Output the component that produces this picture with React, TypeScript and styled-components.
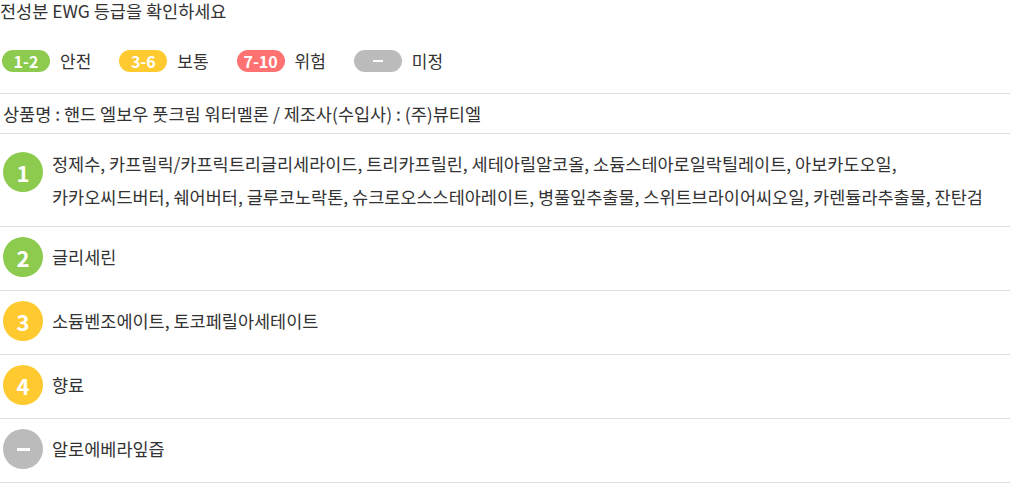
import React from "react";
import styled, { createGlobalStyle } from "styled-components";

const Global = createGlobalStyle`
  html, body { margin: 0; padding: 0; background: #fff; }
  body { font-family: "Noto Sans CJK KR", "Noto Sans", sans-serif; color: #333; }
`;

const Wrap = styled.div`
  width: 1010px;
`;

const Title = styled.h2`
  margin: 0;
  height: 24px;
  font-size: 17.5px;
  line-height: 22px;
  font-weight: 400;
  color: #333;
`;

const Legend = styled.div`
  display: flex;
  align-items: center;
  gap: 28px;
  padding: 26px 0 21px 2px;
  border-bottom: 1px solid #dcdcdc;
`;

const LegendItem = styled.div`
  display: flex;
  align-items: center;
  gap: 10px;
  height: 22px;
`;

const Pill = styled.span<{ $c: string }>`
  display: inline-flex;
  align-items: center;
  justify-content: center;
  width: 48px;
  height: 22px;
  border-radius: 11px;
  background: ${(p) => p.$c};
  color: #fff;
  font-size: 16px;
  font-weight: 700;
  line-height: 1;
`;

const LegendLabel = styled.span`
  font-size: 17px;
  line-height: 22px;
  color: #333;
`;

const PillDash = styled.span`
  display: block;
  width: 10px;
  height: 2px;
  background: #fff;
`;

const Product = styled.div`
  font-size: 17.5px;
  line-height: 39px;
  padding-left: 3px;
  color: #333;
  border-bottom: 1px solid #dcdcdc;
`;

const Row = styled.div`
  display: flex;
  align-items: flex-start;
  gap: 9px;
  padding: 10px 0 13px 3px;
  border-bottom: 1px solid #dcdcdc;
`;

const Circle = styled.span<{ $c: string; $offset?: number }>`
  flex: none;
  width: 40px;
  height: 40px;
  border-radius: 50%;
  background: ${(p) => p.$c};
  margin-top: ${(p) => p.$offset ?? 0}px;
  display: flex;
  align-items: center;
  justify-content: center;
  color: #fff;
  font-size: 22px;
  font-weight: 700;
`;

const Dash = styled.span`
  display: block;
  width: 13px;
  height: 3px;
  background: #fff;
`;

const Text = styled.div`
  font-size: 17.5px;
  line-height: 33px;
  margin-top: 3px;
  color: #333;
  word-break: keep-all;
`;

const GREEN = "#8dcb4e";
const YELLOW = "#ffca30";
const RED = "#ff7272";
const GREY = "#bbbbbb";

const legend = [
  { t: "1-2", c: GREEN, l: "안전" },
  { t: "3-6", c: YELLOW, l: "보통" },
  { t: "7-10", c: RED, l: "위험" },
  { t: "-", c: GREY, l: "미정" },
];

const rows = [
  {
    n: "1",
    c: GREEN,
    off: 8,
    t: "정제수, 카프릴릭/카프릭트리글리세라이드, 트리카프릴린, 세테아릴알코올, 소듐스테아로일락틸레이트, 아보카도오일, 카카오씨드버터, 쉐어버터, 글루코노락톤, 슈크로오스스테아레이트, 병풀잎추출물, 스위트브라이어씨오일, 카렌듈라추출물, 잔탄검",
  },
  { n: "2", c: GREEN, t: "글리세린" },
  { n: "3", c: YELLOW, t: "소듐벤조에이트, 토코페릴아세테이트" },
  { n: "4", c: YELLOW, t: "향료" },
  { n: "-", c: GREY, t: "알로에베라잎즙" },
];

export default function App() {
  return (
    <Wrap>
      <Global />
      <Title>전성분 EWG 등급을 확인하세요</Title>
      <Legend>
        {legend.map((i) => (
          <LegendItem key={i.l}>
            <Pill $c={i.c}>{i.t === "-" ? <PillDash /> : i.t}</Pill>
            <LegendLabel>{i.l}</LegendLabel>
          </LegendItem>
        ))}
      </Legend>
      <Product>상품명 : 핸드 엘보우 풋크림 워터멜론 / 제조사(수입사) : (주)뷰티엘</Product>
      {rows.map((r, i) => (
        <Row key={i}>
          <Circle $c={r.c} $offset={r.off}>
            {r.n === "-" ? <Dash /> : r.n}
          </Circle>
          <Text>{r.t}</Text>
        </Row>
      ))}
    </Wrap>
  );
}
